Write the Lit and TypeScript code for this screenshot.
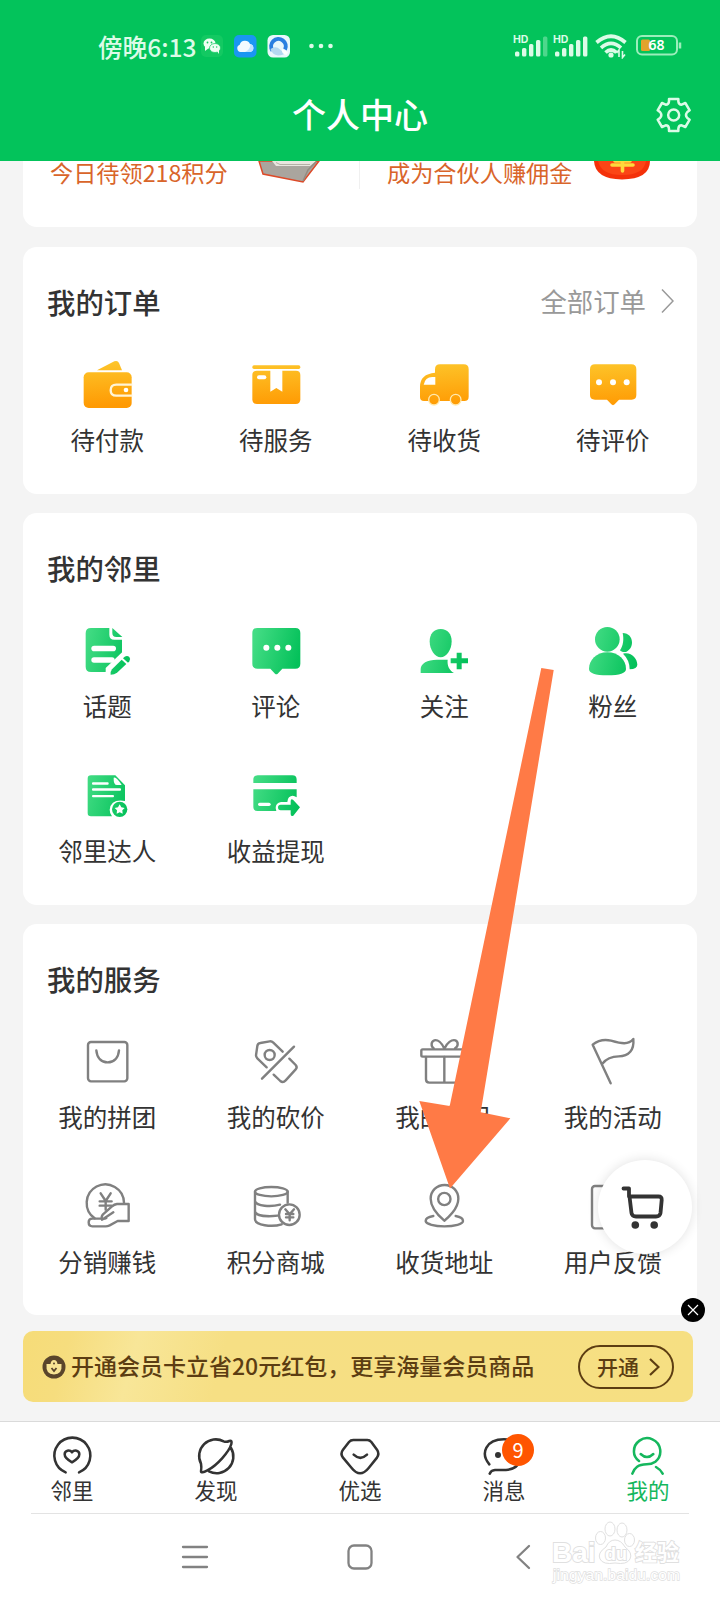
import { LitElement, html, svg, css, SVGTemplateResult } from "lit";
import { customElement, property } from "lit/decorators.js";
import { classMap } from "lit/directives/class-map.js";

type Tone = "amber" | "green" | "line";

interface Glyph {
  tone: Tone;
  x: number;
  y: number;
  art: SVGTemplateResult;
}

interface Entry {
  icon: string;
  label: string;
}

// Glyph art is drawn on 180-unit tiles; x and y give the tile's corner on the sheet.
const GLYPHS: Record<string, Glyph> = {
  wallet: {
    tone: "amber", x: 232, y: 342,
    art: svg`
      <path d="M292 391 L344 364 Q354 360 358 369 L367 391 Z"/>
      <rect x="252" y="397" width="144" height="107" rx="15"/>
      <path class="cut-line" d="M398 434 H350 Q333 434 333 450.500 Q333 467 350 467 H398"/>
      <circle class="cut" cx="379" cy="450" r="7"/>`,
  },
  parcel: {
    tone: "amber", x: 737, y: 342,
    art: svg`
      <rect x="756" y="376" width="144" height="11" rx="5"/>
      <path d="M756 405 Q756 392 769 392 H887 Q900 392 900 405 V478 Q900 492 886 492 H770 Q756 492 756 478 Z"/>
      <path class="cut" d="M810 390 H846 V455 L828 444 L810 455 Z"/>
      <rect class="cut" x="770" y="406" width="28" height="12" rx="6"/>`,
  },
  truck: {
    tone: "amber", x: 163, y: 342,
    art: svg`
      <path d="M226 388 Q226 373 241 373 H312 Q327 373 327 388 V470 Q327 483 314 483 H193 Q181 483 181 471 V440 Q181 402 226 398 Z"/>
      <path class="cut" d="M227 411 V434 H192 Q196 412 218 411 Z"/>
      <circle class="rim" cx="223" cy="479" r="16"/>
      <circle class="rim" cx="288" cy="479" r="16"/>`,
  },
  review: {
    tone: "amber", x: 668, y: 342,
    art: svg`
      <path d="M704 373 H813 Q828 373 828 388 V465 Q828 479 814 479 H776 L763 493 Q758 498 753 493 L740 479 H704 Q689 479 689 465 V388 Q689 373 704 373 Z"/>
      <circle class="cut" cx="716" cy="427" r="9"/><circle class="cut" cx="758" cy="427" r="9"/><circle class="cut" cx="799" cy="427" r="9"/>`,
  },
  topic: {
    tone: "green", x: 232, y: 240,
    art: svg`
      <path d="M274 264 H329 V284 Q329 299 344 299 H367 V345 L318 396 H274 Q258 396 258 380 V280 Q258 264 274 264 Z"/>
      <path d="M338 264 L368 291 H350 Q338 291 338 279 Z"/>
      <rect class="cut" x="275" y="317" width="74" height="17" rx="8.500"/>
      <rect class="cut" x="275" y="352" width="70" height="16" rx="8"/>
      <path class="cut" d="M368 336 L318 384 V400 H340 L372 372 Z"/>
      <path d="M337 388 L366 359 L380 372 L352 398 Q344 404 333 404 Q332 394 337 388 Z"/>
      <path d="M370 355 L375 350 Q383 345 389 351 Q394 357 389 364 L385 368 Z"/>`,
  },
  comment: {
    tone: "green", x: 737, y: 240,
    art: svg`
      <path d="M771 264 H885 Q900 264 900 279 V371 Q900 386 885 386 H846 L832 401 Q828 405 824 401 L810 386 H771 Q756 386 756 371 V279 Q756 264 771 264 Z"/>
      <circle class="cut" cx="798" cy="323" r="9"/><circle class="cut" cx="831" cy="323" r="9"/><circle class="cut" cx="864" cy="323" r="9"/>`,
  },
  follow: {
    tone: "green", x: 163, y: 240,
    art: svg`
      <path d="M243 267 C264 267 276 283 276 304 C276 330 260 352 243 352 C226 352 210 330 210 304 C210 283 222 267 243 267 Z"/>
      <path d="M183 399 V387 C184 370 202 359 232 359 H264 C262 376 268 390 283 399 Z"/>
      <path d="M291 338 H306 V355 H325 V370 H306 V388 H291 V370 H273 V355 H291 Z"/>`,
  },
  fans: {
    tone: "green", x: 668, y: 240,
    art: svg`
      <ellipse cx="741" cy="298" rx="37" ry="37"/>
      <path d="M741 337 C775 337 797 360 797 387 Q797 406 741 406 Q686 406 686 387 C686 360 708 337 741 337 Z"/>
      <path d="M787 279 C805 279 815 292 815 307 C815 321 808 331 797 336 C788 337 782 335 779 331 C789 317 791 297 787 279 Z"/>
      <path d="M788 341 C812 334 831 355 831 374 Q831 386 808 388 Q808 360 788 341 Z"/>`,
  },
  expert: {
    tone: "green", x: 232, y: 674,
    art: svg`
      <path d="M274 705 H347 L376 735 V782 Q334 775 330 808 Q330 820 337 828 H274 Q264 828 264 818 V715 Q264 705 274 705 Z"/>
      <path class="cut" d="M342 712 Q350 708 366 734 H352 Q341 734 342 712 Z"/>
      <rect class="cut" x="277" y="726" width="50" height="7" rx="3"/>
      <rect class="cut" x="277" y="744" width="87" height="7" rx="3"/>
      <rect class="cut" x="277" y="764" width="66" height="7" rx="3"/>
      <circle cx="360" cy="807" r="23"/>
      <path class="cut" d="M360 792 L365 801 L375 803 L368 810 L369 820 L360 816 L351 820 L352 810 L345 803 L355 801 Z"/>`,
  },
  cash: {
    tone: "green", x: 737, y: 674,
    art: svg`
      <path d="M772 705 H876 Q889 705 889 718 V728 H759 V718 Q759 705 772 705 Z"/>
      <path d="M759 747 H889 V771 Q876 762 866 771 Q861 777 861 785 H842 Q826 788 826 803 L828 812 H772 Q759 812 759 799 Z"/>
      <rect class="cut" x="773" y="787" width="38" height="10" rx="5"/>
      <path d="M841 793 H871 V782 Q871 775 878 778 L899 801 L879 826 Q871 830 871 821 V810 H841 Q833 810 833 801 Q833 793 841 793 Z"/>`,
  },
  bag: {
    tone: "line", x: 232, y: 336,
    art: svg`
      <rect x="265" y="369" width="118" height="118" rx="9"/>
      <path d="M290 394 C292 418 306 430 324 430 C342 430 356 418 358 394"/>`,
  },
  bargain: {
    tone: "line", x: 737, y: 336,
    art: svg`
      <path d="M799 445 L771 418 Q767 414 767 409 L771 381 Q772 373 780 372 L808 367 Q814 366 819 371 L847 398"/>
      <circle cx="808" cy="408" r="15"/>
      <path d="M881 383 L785 479"/>
      <path d="M867 419 L886 438 Q892 445 886 451 L856 484 Q848 493 840 486 L820 467"/>`,
  },
  gift: {
    tone: "line", x: 163, y: 336,
    art: svg`
      <rect x="185" y="391" width="138" height="22" rx="4"/>
      <path d="M199 414 V481 Q199 491 209 491 H300 Q310 491 310 481 V414 M254 414 V490"/>
      <path d="M254 389 C246 371 234 361 224 364 C214 367 213 382 222 388 M254 389 C262 371 276 361 287 364 C297 368 296 383 286 388"/>`,
  },
  flag: {
    tone: "line", x: 668, y: 336,
    art: svg`
      <path d="M751 493 L697 377 Q721 358 752 365 C784 374 804 378 819 360 C822 393 806 412 775 412 C750 412 737 420 726 434"/>`,
  },
  earn: {
    tone: "line", x: 232, y: 770,
    art: svg`
      <path d="M285 900 A56 56 0 1 1 373 853"/>
      <path d="M303 825 L318 848 L333 825 M300 849 H336 M300 862 H336 M318 848 V874"/>
      <path d="M387 857 H352 Q344 858 337 864 L310 888 Q304 895 307 904 L341 882 M387 857 V908 H354 L330 921 Q324 924 318 924 H278 Q267 924 267 912 Q267 901 278 901 H306 Q314 903 320 899"/>`,
  },
  coins: {
    tone: "line", x: 737, y: 770,
    art: svg`
      <ellipse cx="813" cy="820" rx="49" ry="14"/>
      <path d="M764 820 V903 C764 921 815 927 844 918 M862 820 V853 M764 848 C767 864 812 866 839 859 M764 880 C768 893 802 895 832 892"/>
      <circle cx="867" cy="889" r="31"/>
      <path d="M855 873 L868 888 L881 873 M857 887 H879 M857 897 H879 M868 888 V906"/>`,
  },
  address: {
    tone: "line", x: 163, y: 770,
    art: svg`
      <path d="M254 907 C247 901 213 872 213 841 C213 818 231 800 255 800 C278 800 296 818 296 841 C296 872 262 901 254 907 Z"/>
      <circle cx="254" cy="842" r="18.500"/>
      <path d="M221 893 C204 896 198 901 198 908 C199 917 224 924 254 924 C285 924 310 917 310 908 C310 901 305 896 288 893"/>`,
  },
  feedback: {
    tone: "line", x: 668, y: 770,
    art: svg`
      <rect x="695" y="803" width="124" height="127" rx="9"/>
      <path d="M744 843 H784 M744 874 H762"/>`,
  },
};

const ORDERS: Entry[] = [
  { icon: "wallet", label: "待付款" },
  { icon: "parcel", label: "待服务" },
  { icon: "truck", label: "待收货" },
  { icon: "review", label: "待评价" },
];

const NEIGHBOURS: Entry[] = [
  { icon: "topic", label: "话题" },
  { icon: "comment", label: "评论" },
  { icon: "follow", label: "关注" },
  { icon: "fans", label: "粉丝" },
  { icon: "expert", label: "邻里达人" },
  { icon: "cash", label: "收益提现" },
];

const SERVICES: Entry[] = [
  { icon: "bag", label: "我的拼团" },
  { icon: "bargain", label: "我的砍价" },
  { icon: "gift", label: "我的礼品" },
  { icon: "flag", label: "我的活动" },
  { icon: "earn", label: "分销赚钱" },
  { icon: "coins", label: "积分商城" },
  { icon: "address", label: "收货地址" },
  { icon: "feedback", label: "用户反馈" },
];

@customElement("grid-icon")
class GridIcon extends LitElement {
  @property() name = "";

  static styles = css`
    :host { display: block; width: 60px; height: 60px; }
    svg { display: block; width: 60px; height: 60px; }
    .line { fill: none; stroke: #808080; stroke-width: 7.200; stroke-linecap: round; stroke-linejoin: round; }
    .cut { fill: #fff; }
    .cut-line { fill: none; stroke: #fff4d6; stroke-width: 7; }
    .rim { stroke: #ffe9b0; stroke-width: 4; }
  `;

  render() {
    const g = GLYPHS[this.name];
    const amber = g.tone === "amber";
    return html`<svg viewBox="${g.x} ${g.y} 180 180">
      <defs>
        <linearGradient id="tone" gradientUnits="userSpaceOnUse"
          x1=${amber ? g.x : g.x + 20} y1=${amber ? g.y + 25 : g.y + 70}
          x2=${amber ? g.x + 8 : g.x + 160} y2=${amber ? g.y + 160 : g.y + 105}>
          <stop offset="0" stop-color=${amber ? "#fdc62b" : "#43dc84"}></stop>
          <stop offset="1" stop-color=${amber ? "#ff9a03" : "#04c15a"}></stop>
        </linearGradient>
      </defs>
      <g class=${g.tone} fill=${g.tone === "line" ? "none" : "url(#tone)"}>${g.art}</g>
    </svg>`;
  }
}

@customElement("menu-card")
class MenuCard extends LitElement {
  @property() heading = "";
  @property() more = "";
  @property({ attribute: false }) entries: Entry[] = [];

  static styles = css`
    :host { display: block; background: #fff; border-radius: 14px; padding: 34.600px 0 36.800px; }
    .head { display: flex; align-items: center; justify-content: space-between; height: 40px; padding: 0 23px 0 24px; margin-bottom: 32.400px; }
    .title { font-size: 28.400px; font-weight: 500; line-height: 40px; color: #333; }
    .more { display: flex; align-items: center; gap: 15px; font-size: 26.400px; line-height: 36px; height: 36px; color: #999; margin-bottom: 2px; }
    .more svg { width: 13px; height: 26px; fill: none; stroke: #999; stroke-width: 1.500; }
    .grid { display: grid; grid-template-columns: repeat(4, 1fr); row-gap: 41.400px; }
    .cell { display: flex; flex-direction: column; align-items: center; gap: 9.200px; }
    .label { font-size: 24.500px; line-height: 34px; height: 34px; color: #333; white-space: nowrap; }
  `;

  render() {
    return html`
      <div class="head">
        <span class="title">${this.heading}</span>
        ${this.more
          ? html`<span class="more">${this.more}<svg viewBox="0 0 13 26"><path d="M1 1.500 L12 13 L1 24.500"/></svg></span>`
          : ""}
      </div>
      <div class="grid">
        ${this.entries.map(
          (e) => html`<div class="cell"><grid-icon name=${e.icon}></grid-icon><span class="label">${e.label}</span></div>`,
        )}
      </div>`;
  }
}

const TABS = [
  {
    label: "邻里",
    x: 160,
    art: svg`<path d="M196 487 A54 54 0 1 1 236 487"/>
      <path d="M215 457 C204 451 193 443 193 433 C193 421 208 418 215 427 C222 418 237 421 237 433 C237 443 226 451 215 457 Z"/>`,
  },
  {
    label: "发现",
    x: 593,
    art: svg`<path d="M603 461 A50 50 0 0 1 671 394 Q679 397 688 393 Q697 390 694 402 C688 424 652 466 622 481 Q603 491 603 484 Q605 472 603 461 M693 414 A50 50 0 0 1 627 484"/>`,
  },
  {
    label: "优选",
    x: 1025,
    art: svg`<path d="M1060 390 H1102 Q1109 390 1114 396 L1131 419 Q1139 431 1131 443 L1106 474 Q1080 506 1055 474 L1029 443 Q1020 431 1029 419 L1047 396 Q1052 390 1060 390 Z"/>
      <path d="M1061 434 Q1081 453 1101 434"/>`,
  },
  {
    label: "消息",
    x: 1457,
    badge: "9",
    art: svg`<path d="M1468 463 C1440 430 1458 388 1512 388 C1560 388 1575 425 1565 447 C1557 465 1540 479 1518 480 H1485 Q1473 481 1469 491"/>
      <circle class="dot" cx="1494" cy="435" r="9"/>`,
  },
  {
    label: "我的",
    x: 1889,
    active: true,
    art: svg`<path d="M1917 453 Q1902 442 1902 427 A39.500 39.500 0 1 1 1966 455 Q1955 463 1940 463 C1914 464 1904 472 1897 491 M1968 471 Q1981 478 1988 491"/>
      <path d="M1922 432 Q1941 450 1960 432"/>`,
  },
];

@customElement("app-root")
class AppRoot extends LitElement {
  static styles = css`
    :host {
      display: flex; flex-direction: column; position: relative; width: 720px; height: 1600px; overflow: hidden;
      background: #f4f4f4; font-family: "Noto Sans CJK SC", sans-serif; color: #333;
    }
    svg { display: block; }
    .top { height: 161px; flex: none; background: #03c35b; color: #fff; display: flex; flex-direction: column; }
    .status { height: 69px; padding: 23px 37px 0 98px; box-sizing: border-box; display: flex; align-items: center; color: #dcfbe7; }
    .clock { font-size: 24.600px; font-weight: 500; line-height: 46px; width: 103px; white-space: nowrap; }
    .apps { width: 140px; height: 24px; }
    .signals { width: 170px; height: 26px; margin-left: auto; }
    .hd { font: 700 10.500px Inter, sans-serif; fill: #dcfbe7; }
    .charge { font: 600 14px "Noto Sans", sans-serif; fill: #fff; }
    .bar { display: grid; grid-template-columns: 1fr auto 1fr; align-items: center; height: 90px; }
    .name { grid-column: 2; font-size: 34px; font-weight: 500; line-height: 50px; }
    .gear { justify-self: end; width: 36px; height: 36px; margin: 2px 28px 0 0; }

    .list { display: flex; flex-direction: column; margin: 0 23px; height: 1170px; }
    .promo { height: 66px; background: #fff; border-radius: 0 0 14px 14px; display: grid; grid-template-columns: 336px 1px 1fr; margin-bottom: 20px; }
    .offer { display: flex; align-items: flex-start; justify-content: space-between; font-size: 23.200px; line-height: 22px; color: #d9652a; white-space: nowrap; }
    .offer.points { padding: 0 37px 0 27px; }
    .offer.partner { padding: 0 46px 0 27px; }
    .split { background: #f0f0f0; height: 28px; }
    .promo .book { width: 64px; height: 24px; }
    .promo .purse { width: 58px; height: 20px; }
    .orders { margin-bottom: 19px; }
    .neighbours { margin-bottom: 19.400px; }

    .vip {
      display: flex; align-items: center; height: 71px; flex: none; width: 670px; box-sizing: border-box; margin-left: 23px; border-radius: 10px;
      padding: 0 19px; color: #5c3d12;
      background: linear-gradient(105deg, #f6dc78 0%, #f6dd7e 7%, #f8e698 17%, #f6df84 30%, #f6df82 100%);
    }
    .vip .crown { width: 24px; height: 24px; margin-right: 5px; }
    .pitch { font-size: 23px; font-weight: 500; white-space: nowrap; line-height: 32px; margin-bottom: 3px; }
    .open {
      margin-left: auto; width: 96px; height: 44px; box-sizing: border-box; border: 2px solid #5c3d12; border-radius: 22px;
      display: flex; align-items: center; gap: 10px; padding-left: 17px; font-size: 21px; line-height: 38px; font-weight: 500; white-space: nowrap;
    }
    .open span { margin-bottom: 2px; }
    .open svg { width: 11px; height: 18px; fill: none; stroke: #5c3d12; stroke-width: 2.200; }

    .dock { margin-top: auto; height: 179px; flex: none; background: #fff; border-top: 1px solid #dadada; box-sizing: border-box; display: flex; flex-direction: column; }
    .tabs { display: grid; grid-template-columns: repeat(5, 144px); height: 92px; box-sizing: border-box; padding-top: 13px; }
    .tab { position: relative; display: flex; flex-direction: column; align-items: center; color: #333; }
    .tab svg { width: 46px; height: 42px; fill: none; stroke: currentColor; stroke-width: 7.600; stroke-linecap: round; stroke-linejoin: round; }
    .tab .dot { fill: currentColor; stroke: none; }
    .tab span { font-size: 21.500px; line-height: 30px; margin-top: -2px; }
    .tab.active { color: #15b75d; }
    .tab .badge { position: absolute; left: 70px; top: -1px; width: 32px; height: 32px; border-radius: 16px; background: #ff5500; color: #fff; text-align: center; font-weight: 400; font-size: 20px; line-height: 31px; }
    .rule { height: 1px; background: #e3e3e3; margin: -1px 31px 0; flex: none; }
    .keys { flex: 1; display: grid; grid-template-columns: repeat(3, 164.500px); justify-content: center; justify-items: center; align-items: center; padding-right: 1px; }
    .keys svg { width: 28px; height: 28px; fill: none; stroke: #828282; stroke-width: 2.300; stroke-linecap: round; stroke-linejoin: round; }

    .mark { position: absolute; left: 548px; top: 1518px; width: 140px; height: 68px; fill: #fff; stroke: #e0e0e0; stroke-width: 1; }
    .mark text { paint-order: stroke; stroke-width: 1.800; }
    .mark .brand { font: 700 28px "Liberation Sans", sans-serif; }
    .mark .du { font: 700 18px "Liberation Sans", sans-serif; }
    .mark .cn { font: 700 22px "Noto Sans CJK SC", sans-serif; }
    .mark .site { font: 400 15.500px "Liberation Sans", sans-serif; stroke-width: 1.400; }
    .arrow { position: absolute; left: 419px; top: 668px; width: 136px; height: 521px; fill: #ff7a46; }
    .cart { position: absolute; left: 598px; top: 1160px; width: 94px; height: 94px; border-radius: 47px; background: #fff; box-shadow: 0 0 12px rgba(0, 0, 0, 0.12); }
    .cart svg { width: 94px; height: 94px; fill: none; stroke: #333; stroke-width: 3.800; stroke-linecap: round; stroke-linejoin: round; }
    .close { position: absolute; left: 681px; top: 1298px; width: 24px; height: 24px; }
  `;

  private statusBar() {
    const bars = (x: number, faded: boolean) =>
      [5, 8.5, 12.5, 16.5, 20].map(
        (h, i) => svg`<rect x=${x + i * 7} y=${23.5 - h} width="4.400" height=${h} rx="1.500" fill="#dcfbe7" opacity=${faded && i === 4 ? 0.35 : 1}/>`,
      );
    return html`<div class="status">
      <span class="clock">傍晚6:13</span>
      <svg class="apps" viewBox="0 0 140 24">
        <rect x="0" y="1" width="22" height="22" rx="5" fill="#13c962"/>
        <g fill="#effff4">
          <ellipse cx="8.500" cy="9.500" rx="6" ry="5"/><path d="M4 12 L4 17 L8 14 Z"/>
          <ellipse cx="14" cy="14" rx="5.500" ry="4.500" stroke="#13c962" stroke-width=".7"/><path d="M16 17 L18 20 L18 15 Z"/>
        </g>
        <g fill="#13c962"><circle cx="6.500" cy="8.500" r=".9"/><circle cx="10.500" cy="8.500" r=".9"/><circle cx="12.300" cy="13" r=".7"/><circle cx="15.700" cy="13" r=".7"/></g>
        <rect x="33" y="1" width="22.500" height="22.500" rx="5" fill="#1a96f2"/>
        <path d="M39.500 18 a3.800 3.800 0 0 1 -.8 -7.300 a5.500 5.500 0 0 1 10.300 -.6 a4 4 0 0 1 0 7.900 Z" fill="#f2faff"/>
        <path d="M49 18 H44 Q49 16 49.500 10.200 a4 4 0 0 1 -.5 7.800" fill="#bfe2ff"/>
        <rect x="66.500" y="1" width="22.500" height="22.500" rx="5.500" fill="#e9f7fb"/>
        <path d="M71.500 16.500 A7.300 7.300 0 1 1 84 15.500" fill="none" stroke="#2a7fe0" stroke-width="4"/>
        <path d="M69.500 15 Q75 11.500 79 15.500 Q82 19 86 17.500 Q83 21.500 77 21.500 Q71 20.500 69.500 15 Z" fill="#b4d8f0"/>
        <path d="M81 15 L87 18 L85.500 21 Q80 20 81 15 Z" fill="#fff"/>
        <g fill="#dcfbe7"><circle cx="110.500" cy="12" r="2.300"/><circle cx="120" cy="12" r="2.300"/><circle cx="129.500" cy="12" r="2.300"/></g>
      </svg>
      <svg class="signals" viewBox="0 0 170 26">
        <text class="hd" x="0" y="10">HD</text>${bars(2, true)}
        <text class="hd" x="40" y="10">HD</text>${bars(42, false)}
        <g fill="none" stroke="#dcfbe7" stroke-width="3.700">
          <path d="M83.500 9.500 Q98 -3 112.500 9.500"/><path d="M88 14.800 Q98 6 108 14.800"/><path d="M92.500 19.500 Q98 14.500 103.500 19.500"/>
        </g>
        <circle cx="98" cy="22" r="2.600" fill="#dcfbe7"/>
        <path d="M106 24 V17 L103.500 20 M109.500 18 V24.500 L112 21.500" fill="none" stroke="#dcfbe7" stroke-width="1.600"/>
        <rect x="124" y="3" width="40" height="18.500" rx="5" fill="none" stroke="#9beebb" stroke-width="2"/>
        <rect x="128" y="6.500" width="9" height="11.500" rx="1.500" fill="#e3a32c"/>
        <path d="M167 9.500 V15.500" stroke="#9beebb" stroke-width="2.500"/>
        <text class="charge" x="135.500" y="17.300">68</text>
      </svg>
    </div>`;
  }

  private titleBar() {
    return html`<div class="bar">
      <span class="name">个人中心</span>
      <svg class="gear" viewBox="888 291 108 108" fill="none" stroke="#dcfbe7" stroke-width="7.500" stroke-linejoin="round">
        <path d="M927 297 H955 V304 Q956 314 965 314 L976 309 L989 331 L982 336 Q974 345 982 354 L989 359 L976 381 L965 376 Q956 376 955 386 V393 H927 V386 Q926 376 917 376 L906 381 L893 359 L900 354 Q908 345 900 336 L893 331 L906 309 L917 314 Q926 314 927 304 Z"/>
        <circle cx="941" cy="345" r="16.500"/>
      </svg>
    </div>`;
  }

  private promo() {
    return html`<section class="promo">
      <div class="offer points">
        <span>今日待领218积分</span>
        <svg class="book" viewBox="0 0 64 24">
          <path d="M1 0 L5 13 L45 21 L61 0 Z" fill="#aaa59e" stroke="#dd4a28" stroke-width="1.500"/>
          <path d="M14 0 L18 5 L52 5 L58 0 Z" fill="#e9e6df"/>
          <path d="M18 1.500 L22 3.500 H52" fill="none" stroke="#b5b0a6" stroke-width="1"/>
          <path d="M45 20 L50 9 L58 1" fill="none" stroke="#938c82" stroke-width="1.500"/>
        </svg>
      </div>
      <div class="split"></div>
      <div class="offer partner">
        <span>成为合伙人赚佣金</span>
        <svg class="purse" viewBox="0 0 58 20">
          <path d="M1 0 H57 Q57 18 29 18.500 Q2 18 1 0 Z" fill="#f4310a"/>
          <path d="M5 0 H53 Q51 14 29 14 Q8 14 5 0 Z" fill="#fb4516"/>
          <path d="M19 4 H40 M29.500 0 V10 M22 0 H37" stroke="#ffd83c" stroke-width="3.600" stroke-linecap="round"/>
        </svg>
      </div>
    </section>`;
  }

  private vip() {
    return html`<section class="vip">
      <svg class="crown" viewBox="0 0 24 24">
        <circle cx="12" cy="12" r="11.500" fill="#5a452b"/>
        <path d="M4.500 9 L8.500 9 Q9 5 12 5 Q15 5 15.500 9 L19.500 9 Q20.500 19.500 12 19.500 Q3.500 19.500 4.500 9 Z" fill="#f8e494"/>
        <path d="M9.500 13 L12 16 L14.500 13" fill="none" stroke="#5a452b" stroke-width="1.800"/>
        <circle cx="12" cy="8.500" r="1" fill="#5a452b"/>
      </svg>
      <span class="pitch">开通会员卡立省20元红包，更享海量会员商品</span>
      <div class="open"><span>开通</span><svg viewBox="0 0 11 18"><path d="M1 1 L9.500 9 L1 17"/></svg></div>
    </section>`;
  }

  private dock() {
    return html`<footer class="dock">
      <nav class="tabs">
        ${TABS.map(
          (t) => html`<div class=${classMap({ tab: true, active: !!t.active })}>
            <svg viewBox="${t.x - 14} 375 138 126">${t.art}</svg>
            <span>${t.label}</span>
            ${t.badge ? html`<b class="badge">${t.badge}</b>` : ""}
          </div>`,
        )}
      </nav>
      <div class="rule"></div>
      <div class="keys">
        <svg viewBox="0 0 28 28"><path d="M2 4 H26 M2 14 H26 M2 24 H26"/></svg>
        <svg viewBox="0 0 28 28"><rect x="2.500" y="2.500" width="23" height="23" rx="5.500"/></svg>
        <svg viewBox="0 0 28 28"><path d="M19 3 L7.500 14 L19 25"/></svg>
      </div>
    </footer>`;
  }

  render() {
    return html`
      <header class="top">${this.statusBar()}${this.titleBar()}</header>
      <main class="list">
        ${this.promo()}
        <menu-card class="orders" heading="我的订单" more="全部订单" .entries=${ORDERS}></menu-card>
        <menu-card class="neighbours" heading="我的邻里" .entries=${NEIGHBOURS}></menu-card>
        <menu-card heading="我的服务" .entries=${SERVICES}></menu-card>
      </main>
      ${this.vip()}${this.dock()}
      <svg class="mark" viewBox="0 0 140 68">
        <text class="brand" x="4" y="44">Bai</text>
        <ellipse cx="52.500" cy="20" rx="5" ry="6.500"/><ellipse cx="62" cy="11" rx="5" ry="7"/>
        <ellipse cx="74" cy="12" rx="5" ry="7"/><ellipse cx="81.500" cy="22" rx="5" ry="6.500"/>
        <path d="M67 22 Q73 22 77 29 Q85 35 82 41 Q79 47 67 45 Q55 47 52 41 Q49 35 58 29 Q61 22 67 22 Z"/>
        <text class="du" x="57" y="42">du</text>
        <text class="cn" x="87" y="42">经验</text>
        <text class="site" x="5" y="62" textLength="127">jingyan.baidu.com</text>
      </svg>
      <svg class="arrow" viewBox="419 668 136 521"><path d="M541.300 668 L553.700 670 L480.700 1112.300 L510.300 1118.300 L450 1188.500 L419.300 1101 L449.700 1106 Z"/></svg>
      <div class="cart">
        <svg viewBox="0 0 94 94"><path d="M25.500 28.500 H31 V36.500 H60.500 Q64 36.500 63.700 40 L62.500 53 Q62 56.500 58 56.500 H38 Q34 56.500 33.500 53 L31.500 36.500"/>
        <g fill="#333" stroke="none"><circle cx="37.300" cy="65" r="3.800"/><circle cx="56.200" cy="65" r="3.800"/></g></svg>
      </div>
      <svg class="close" viewBox="0 0 24 24"><circle cx="12" cy="12" r="12" fill="#000"/><path d="M7 7 L17 17 M17 7 L7 17" stroke="#fff" stroke-width="1.200"/></svg>
    `;
  }
}
